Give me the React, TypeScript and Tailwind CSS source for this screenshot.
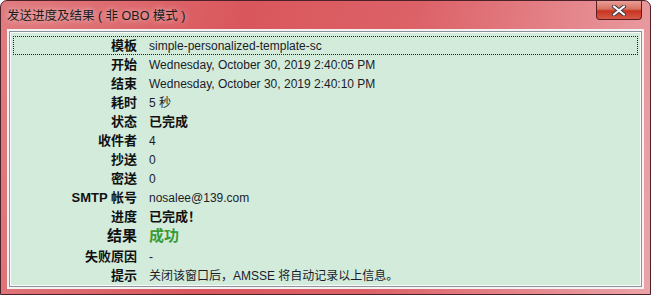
import React from 'react';

const rows: { label: string; value: string; kind?: 'bold' | 'ok' }[] = [
  { label: '模板', value: 'simple-personalized-template-sc' },
  { label: '开始', value: 'Wednesday, October 30, 2019 2:40:05 PM' },
  { label: '结束', value: 'Wednesday, October 30, 2019 2:40:10 PM' },
  { label: '耗时', value: '5 秒' },
  { label: '状态', value: '已完成', kind: 'bold' },
  { label: '收件者', value: '4' },
  { label: '抄送', value: '0' },
  { label: '密送', value: '0' },
  { label: 'SMTP 帐号', value: 'nosalee@139.com' },
  { label: '进度', value: '已完成！', kind: 'bold' },
  { label: '结果', value: '成功', kind: 'ok' },
  { label: '失败原因', value: '-' },
  { label: '提示', value: '关闭该窗口后，AMSSE 将自动记录以上信息。' },
];

const font = { fontFamily: '"Liberation Sans", "Noto Sans CJK SC", sans-serif' };

export default function App() {
  return (
    <div
      className="w-[651px] h-[295px] flex flex-col rounded-t-[7px] border border-[#4a2228] bg-[linear-gradient(100deg,#e07c80_0%,#d9575c_35%,#dc6268_60%,#eba4a9_100%)] overflow-hidden"
      style={font}
    >
      {/* Title bar */}
      <div className="h-[28px] flex items-start justify-between pl-[6px] pr-[8px] shrink-0">
        <span className="mt-[6px] text-[12.5px] leading-[18px] text-[#1c1c1c] [text-shadow:0_0_6px_rgba(255,255,255,0.8)]">
          发送进度及结果 ( 非 OBO 模式 )
        </span>
        <div className="w-[46px] h-[19px] rounded-b-[4px] border border-t-0 border-[#5a1e22] bg-[linear-gradient(180deg,#e8a098_0%,#d8705f_45%,#c8331f_55%,#d55a48_100%)] flex items-center justify-center">
          <svg width="14" height="11" viewBox="0 0 14 11">
            <path d="M2 1.5 L12 9.5 M12 1.5 L2 9.5" stroke="#3a3a48" strokeWidth="4" strokeLinecap="round" />
            <path d="M2 1.5 L12 9.5 M12 1.5 L2 9.5" stroke="#ffffff" strokeWidth="2.2" strokeLinecap="round" />
          </svg>
        </div>
      </div>

      {/* Client area */}
      <div className="flex-1 mx-[6px] mb-[7px] border-2 border-[#f3f3f3]">
        <div className="h-full border border-[#8d929c] bg-[#fafafa] p-px">
          <div className="h-full bg-[#d3ebda] pt-[3px] px-[2px]">
            {rows.map((r, i) => (
              <div
                key={r.label}
                className={`flex items-center ${r.kind === 'ok' ? 'h-[21px]' : 'h-[19px]'} ${
                  i === 0 ? 'outline-1 outline-dotted outline-[#202020] -outline-offset-1' : ''
                }`}
              >
                <div
                  className={`w-[124px] text-right font-bold text-[#111111] ${
                    r.kind === 'ok' ? 'text-[15px]' : 'text-[13px]'
                  }`}
                >
                  {r.label}
                </div>
                <div
                  className={`pl-[12px] ${
                    r.kind === 'ok'
                      ? 'text-[15px] font-bold text-[#3a9a35]'
                      : r.kind === 'bold'
                        ? 'text-[13px] font-bold text-[#111111]'
                        : 'text-[12px] text-[#1b1b2a]'
                  }`}
                >
                  {r.value}
                </div>
              </div>
            ))}
          </div>
        </div>
      </div>
    </div>
  );
}
